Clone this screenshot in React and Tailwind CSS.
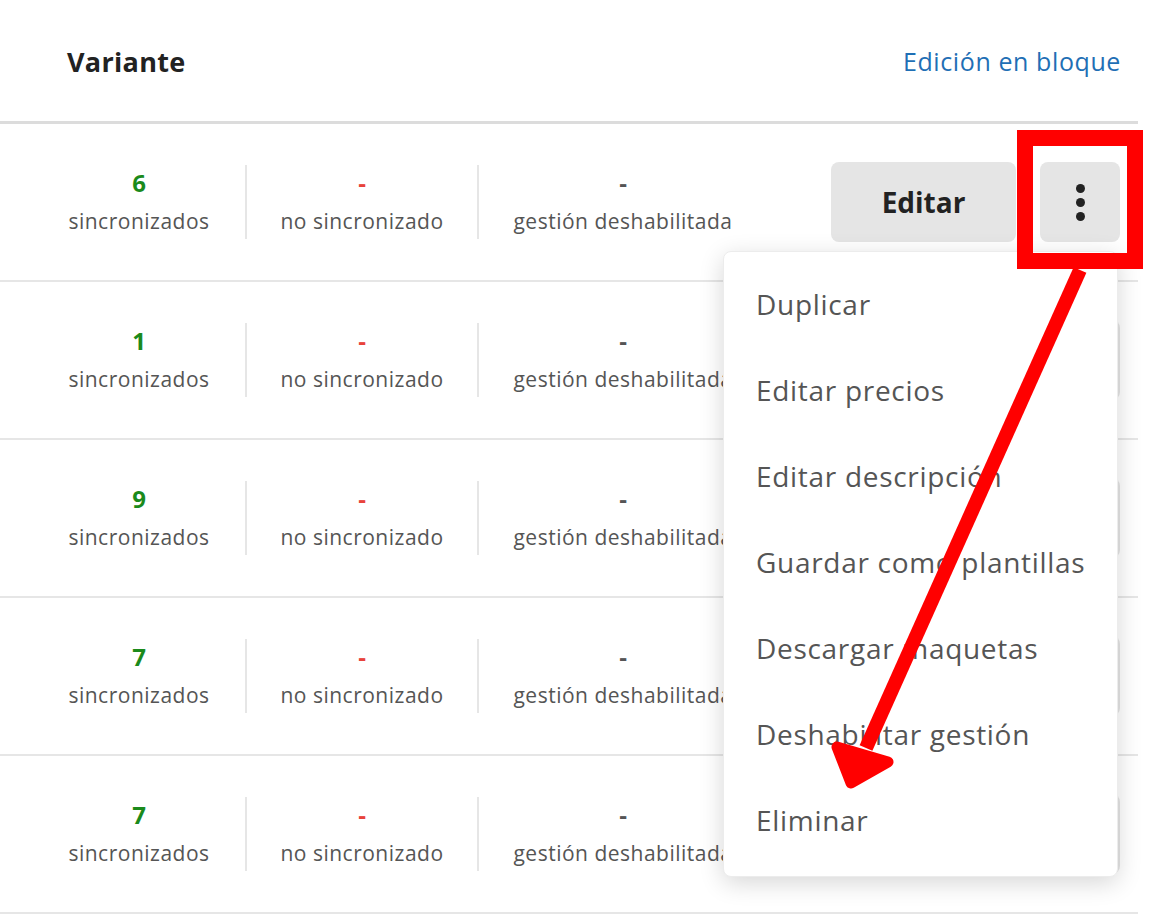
import React from 'react';

const rows = ['6', '1', '9', '7', '7'];

const menuItems = [
  'Duplicar',
  'Editar precios',
  'Editar descripción',
  'Guardar como plantillas',
  'Descargar maquetas',
  'Deshabilitar gestión',
  'Eliminar',
];

const Row = ({ count }) => (
  <div className="flex items-center h-[158px] border-b-2 border-[#e6e6e6]">
    <div className="ml-[33px] w-[212px] h-[74px] flex flex-col items-center justify-center">
      <span className="text-[24px] leading-[28px] font-bold text-[#1b8a1b]">{count}</span>
      <span className="mt-[10px] text-[21px] leading-[28px] tracking-[0.5px] text-[#555]">sincronizados</span>
    </div>
    <div className="w-[232px] h-[74px] border-l-2 border-[#e6e6e6] flex flex-col items-center justify-center">
      <span className="text-[24px] leading-[28px] font-bold text-[#e8423b]">-</span>
      <span className="mt-[10px] text-[21px] leading-[28px] tracking-[0.5px] text-[#555]">no sincronizado</span>
    </div>
    <div className="w-[290px] h-[74px] border-l-2 border-[#e6e6e6] flex flex-col items-center justify-center">
      <span className="text-[24px] leading-[28px] font-bold text-[#555]">-</span>
      <span className="mt-[10px] text-[21px] leading-[28px] tracking-[0.5px] text-[#555] whitespace-nowrap">gestión deshabilitada</span>
    </div>
    <button className="ml-[64px] w-[185px] h-[80px] rounded-lg bg-[#e5e5e5] text-[28px] font-bold text-[#222]">
      Editar
    </button>
    <button className="ml-[24px] w-[80px] h-[80px] rounded-lg bg-[#e5e5e5] flex flex-col items-center justify-center gap-[5px]">
      <span className="w-[9px] h-[9px] rounded-full bg-[#222]" />
      <span className="w-[9px] h-[9px] rounded-full bg-[#222]" />
      <span className="w-[9px] h-[9px] rounded-full bg-[#222]" />
    </button>
  </div>
);

export default function App() {
  return (
    <div className="relative w-[1158px] h-[914px] bg-white overflow-hidden font-['Open_Sans',sans-serif]">
      <div className="w-[1138px]">
        {/* Header */}
        <div className="flex items-center justify-between h-[124px] pt-[3px] pl-[67px] pr-[17px] border-b-[3px] border-[#dcdcdc]">
          <h2 className="text-[27px] tracking-[0.3px] font-bold text-[#222]">Variante</h2>
          <a className="text-[25px] tracking-[0.6px] text-[#1f6fb5]">Edición en bloque</a>
        </div>

        {rows.map((c, i) => (
          <Row key={i} count={c} />
        ))}
      </div>

      {/* Dropdown menu */}
      <div className="absolute left-[723px] top-[251px] w-[395px] h-[626px] bg-white rounded-lg border border-[#ececec] shadow-[0_6px_24px_rgba(0,0,0,0.16)] pt-[9px]">
        {menuItems.map((item) => (
          <div key={item} className="h-[86px] flex items-center px-[32px] text-[28px] tracking-[0.7px] text-[#555] whitespace-nowrap">
            {item}
          </div>
        ))}
      </div>

      {/* Annotation */}
      <svg className="absolute inset-0 pointer-events-none" width="1158" height="914" viewBox="0 0 1158 914">
        <rect x="1025" y="138" width="110" height="123" fill="none" stroke="#ff0000" strokeWidth="16" />
        <line x1="1080" y1="270" x2="866" y2="748" stroke="#ff0000" strokeWidth="14" />
        <polygon
          points="837,747 888,762 851,783"
          fill="#ff0000"
          stroke="#ff0000"
          strokeWidth="11"
          strokeLinejoin="round"
        />
      </svg>
    </div>
  );
}
